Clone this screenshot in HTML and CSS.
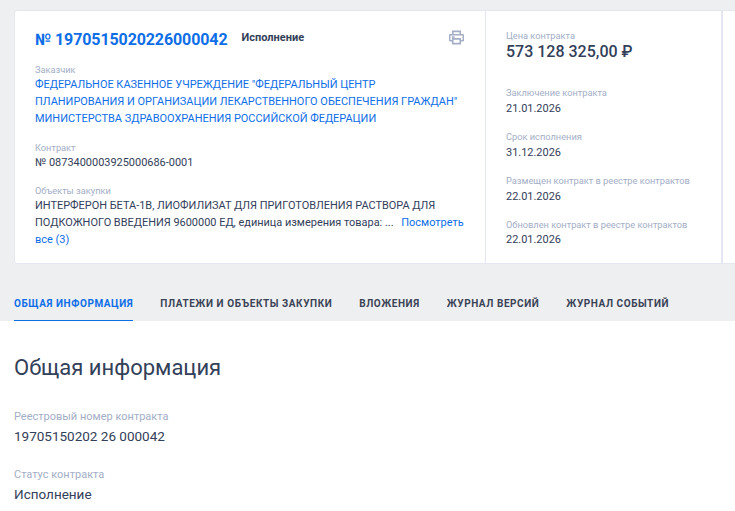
FILE: index.html
```html
<!DOCTYPE html>
<html lang="ru">
<head>
<meta charset="utf-8">
<title>Контракт</title>
<link rel="stylesheet" href="styles.css">
</head>
<body>
<section class="summary">
  <div class="card main">
    <div class="head">
      <a class="num">№ 1970515020226000042</a>
      <span class="status">Исполнение</span>
      <svg class="print" width="15" height="15" viewBox="0 0 16 16" fill="none" stroke="#a3aec6" stroke-width="1.7">
        <path d="M4 5V1.5h8V5"/>
        <path d="M4 11.5H1.5a.8.8 0 0 1-.8-.8V5.8A.8.8 0 0 1 1.5 5h13a.8.8 0 0 1 .8.8v4.9a.8.8 0 0 1-.8.8H12"/>
        <path d="M4 9.5h8v5H4z"/>
        <path d="M3 7.5h3"/>
      </svg>
    </div>
    <div class="field first">
      <div class="label">Заказчик</div>
      <a class="link block">ФЕДЕРАЛЬНОЕ КАЗЕННОЕ УЧРЕЖДЕНИЕ "ФЕДЕРАЛЬНЫЙ ЦЕНТР ПЛАНИРОВАНИЯ И ОРГАНИЗАЦИИ ЛЕКАРСТВЕННОГО ОБЕСПЕЧЕНИЯ ГРАЖДАН" МИНИСТЕРСТВА ЗДРАВООХРАНЕНИЯ РОССИЙСКОЙ ФЕДЕРАЦИИ</a>
    </div>
    <div class="field">
      <div class="label">Контракт</div>
      <div class="value">№ 0873400003925000686-0001</div>
    </div>
    <div class="field">
      <div class="label">Объекты закупки</div>
      <div class="value">ИНТЕРФЕРОН БЕТА-1В, ЛИОФИЛИЗАТ ДЛЯ ПРИГОТОВЛЕНИЯ РАСТВОРА ДЛЯ ПОДКОЖНОГО ВВЕДЕНИЯ 9600000 ЕД, единица измерения товара: ... <a class="link more">Посмотреть все (3)</a></div>
    </div>
  </div>
  <div class="card side">
    <div class="label">Цена контракта</div>
    <div class="price">573 128 325,00 ₽</div>
    <div class="dates">
      <div class="date">
        <div class="label">Заключение контракта</div>
        <div class="value">21.01.2026</div>
      </div>
      <div class="date">
        <div class="label">Срок исполнения</div>
        <div class="value">31.12.2026</div>
      </div>
      <div class="date">
        <div class="label">Размещен контракт в реестре контрактов</div>
        <div class="value">22.01.2026</div>
      </div>
      <div class="date">
        <div class="label">Обновлен контракт в реестре контрактов</div>
        <div class="value">22.01.2026</div>
      </div>
    </div>
  </div>
  <div class="card rest"></div>
</section>
<nav class="tabs">
  <a class="tab active">ОБЩАЯ ИНФОРМАЦИЯ</a>
  <a class="tab">ПЛАТЕЖИ И ОБЪЕКТЫ ЗАКУПКИ</a>
  <a class="tab">ВЛОЖЕНИЯ</a>
  <a class="tab">ЖУРНАЛ ВЕРСИЙ</a>
  <a class="tab">ЖУРНАЛ СОБЫТИЙ</a>
</nav>
<main class="content">
  <h1 class="title">Общая информация</h1>
  <div class="info">
    <div class="info-label">Реестровый номер контракта</div>
    <div class="info-value">19705150202 26 000042</div>
  </div>
  <div class="info">
    <div class="info-label">Статус контракта</div>
    <div class="info-value">Исполнение</div>
  </div>
</main>
</body>
</html>
```
FILE: styles.css
```css
* { box-sizing: border-box; }
html, body { margin: 0; height: 100%; overflow: hidden; }
body {
  background: #fff;
  font-family: Roboto, "Liberation Sans", sans-serif;
  color: #334059;
}
.summary {
  display: flex;
  background: #eeeff1;
  padding: 10px 0 0 14px;
  height: 264px;
}
.card {
  background: #fff;
  border: 1px solid #e4e7f2;
  height: 254px;
}
.main {
  width: 472px;
  flex: none;
  padding: 19px 20px 0 20px;
  border-radius: 3px 0 0 3px;
}
.side {
  width: 236px;
  flex: none;
  border-left: 0;
  padding: 19px 20px 0 20px;
}
.rest { flex: 1; border-right: 0; }
.head {
  display: flex;
  align-items: flex-start;
  height: 32px;
}
.num {
  font-size: 16px;
  font-weight: 700;
  line-height: 20px;
  color: #0d6ee8;
  letter-spacing: -0.1px;
}
.status {
  font-size: 11px;
  font-weight: 700;
  line-height: 16px;
  color: #334059;
  margin-left: 14px;
}
.print { margin-left: auto; margin-right: 1px; }
.label {
  font-size: 9.25px;
  line-height: 12px;
  color: #a3aec6;
}
.field { margin-bottom: 14px; }
.field.first { margin-top: 2px; margin-bottom: 15px; }
.value {
  font-size: 10.95px;
  line-height: 17px;
  color: #334059;
}
.link { color: #0d6ee8; }
.block {
  display: block;
  font-size: 10.95px;
  line-height: 17px;
}
.more { margin-left: 5px; }
.price {
  font-size: 16px;
  font-weight: 500;
  line-height: 20px;
  color: #334059;
}
.dates { margin-top: 25px; }
.date { margin-bottom: 14px; }
.date .value { margin-top: 1px; }
.date:last-child .value { margin-top: 0; }
.tabs {
  display: flex;
  gap: 27px;
  background: #eeeff1;
  padding: 0 14px;
  height: 57px;
  align-items: flex-end;
}
.tab {
  font-size: 10px;
  font-weight: 700;
  letter-spacing: 0.57px;
  line-height: 14px;
  padding-bottom: 10px;
  height: 33px;
  padding-top: 9px;
  color: #3a4356;
  border-bottom: 1px solid transparent;
}
.tab.active {
  color: #0d6ee8;
  border-bottom-color: #0d6ee8;
}
.content { padding: 0 14px; }
.title {
  font-size: 22px;
  font-weight: 400;
  line-height: 28px;
  margin: 33px 0 28px;
  color: #334059;
}
.info { margin-bottom: 23px; }
.info-label {
  font-size: 11px;
  line-height: 14px;
  color: #a3aec6;
}
.info-value {
  font-size: 13.5px;
  line-height: 18px;
  margin-top: 3px;
  color: #334059;
}
```
